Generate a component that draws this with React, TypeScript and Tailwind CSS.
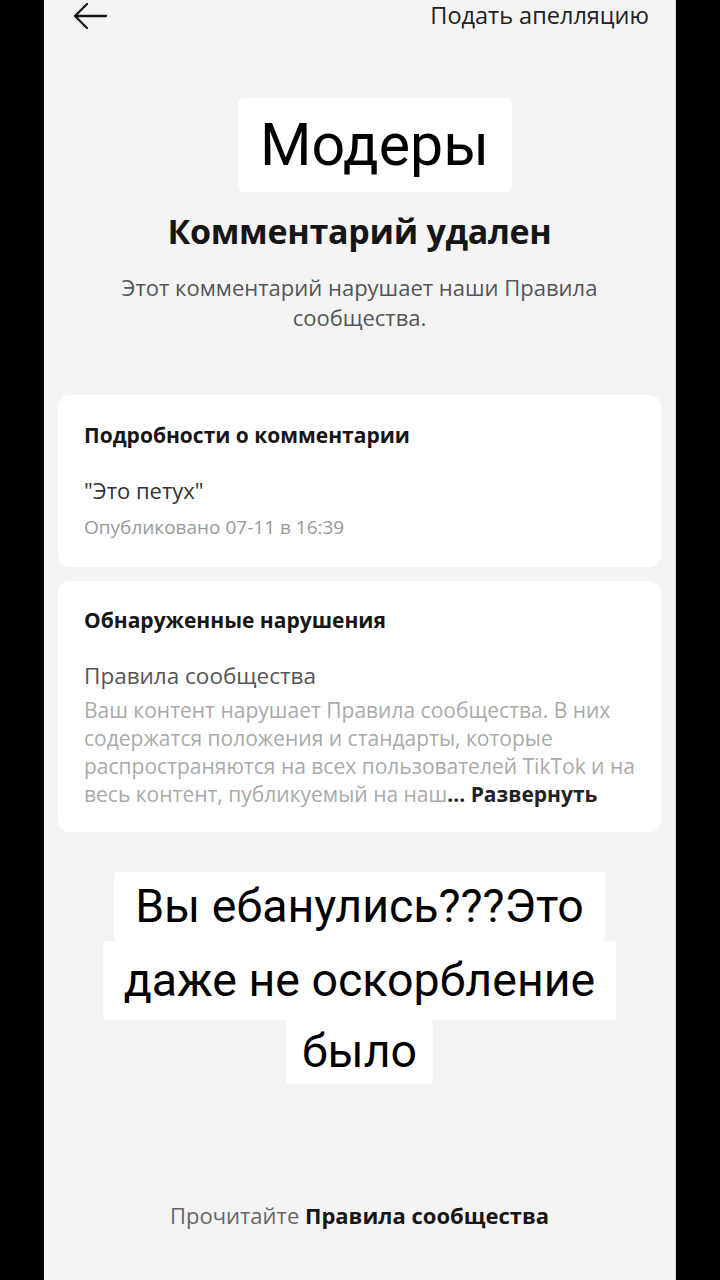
import React from "react";

const ui = "font-['Open_Sans','Noto_Sans',sans-serif]";

function BackArrow() {
  return (
    <svg width="36" height="28" viewBox="0 0 36 28" fill="none" aria-hidden="true">
      <path
        d="M34 14H3M15 2L3 14l12 12"
        stroke="#161616"
        strokeWidth="2.3"
        strokeLinecap="round"
        strokeLinejoin="round"
      />
    </svg>
  );
}

export default function App() {
  return (
    <div className="flex h-[1280px] w-[720px] bg-black">
      <div className={`ml-[44px] flex h-full w-[632px] flex-col border-r border-[#d8d8d8] bg-[#f4f4f4] ${ui}`}>
        {/* шапка обрезана сверху */}
        <div className="flex h-[32px] items-center justify-between pl-[28px] pr-[26px]">
          <BackArrow />
          <span className="text-[23.5px] text-[#222]">Подать апелляцию</span>
        </div>

        {/* наклейка поверх видео */}
        <div className="mt-[66px] flex justify-center pl-[30px]">
          <span className="flex h-[94px] w-[274px] items-center justify-center rounded-md bg-white font-['Roboto',sans-serif] text-[59px] text-black">
            Модеры
          </span>
        </div>

        <h1 className="mt-[14px] text-center text-[34px] font-bold tracking-[-0.3px] text-[#161616]">
          Комментарий удален
        </h1>
        <p className="mt-[15px] text-center text-[22px] leading-[30px] text-[#555]">
          Этот комментарий нарушает наши Правила
          <br />
          сообщества.
        </p>

        <div className="mx-[14px] mt-[63px] flex flex-col rounded-xl bg-white px-[26px] pt-[25px] pb-[26px]">
          <h2 className="text-[21px] font-bold text-[#161616]">Подробности о комментарии</h2>
          <p className="mt-[22px] text-[22px] text-[#333]">"Это петух"</p>
          <p className="mt-[6px] text-[19px] text-[#999]">Опубликовано 07-11 в 16:39</p>
        </div>

        <div className="mx-[14px] mt-[14px] flex flex-col rounded-xl bg-white px-[26px] pt-[24px] pb-[24px]">
          <h2 className="text-[21px] font-bold text-[#161616]">Обнаруженные нарушения</h2>
          <p className="mt-[22px] text-[22.5px] text-[#555]">Правила сообщества</p>
          <p className="mt-[4px] text-[21px] leading-[28px] text-[#aaa]">
            Ваш контент нарушает Правила сообщества. В них
            <br />
            содержатся положения и стандарты, которые
            <br />
            распространяются на всех пользователей TikTok и на
            <br />
            весь контент, публикуемый на наш
            <span className="font-bold text-[#222]">... Развернуть</span>
          </p>
        </div>

        {/* подпись поверх видео */}
        <div className="mt-[40px] flex flex-col items-center font-['Roboto',sans-serif] text-[46.5px] text-black">
          <span className="flex h-[69px] w-[491px] items-center justify-center rounded-sm bg-white">
            Вы ебанулись???Это
          </span>
          <span className="flex h-[79px] w-[513px] items-center justify-center rounded-sm bg-white">
            даже не оскорбление
          </span>
          <span className="flex h-[64px] w-[147px] items-center justify-center rounded-sm bg-white">
            было
          </span>
        </div>

        <p className="mt-auto mb-[48px] text-center text-[22px] text-[#666]">
          Прочитайте <span className="font-bold text-[#161616]">Правила сообщества</span>
        </p>
      </div>
    </div>
  );
}
